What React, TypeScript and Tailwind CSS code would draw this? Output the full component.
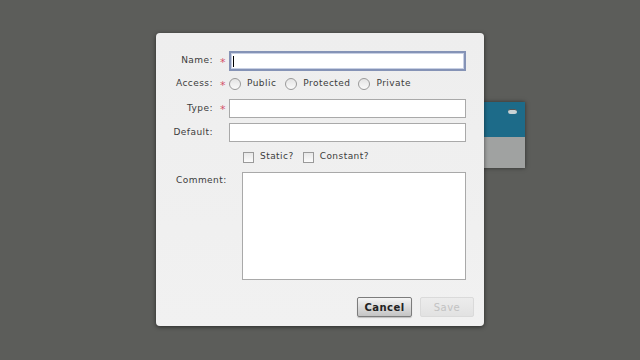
import React from 'react';

function Radio({ label, className = '' }: { label: string; className?: string }) {
  return (
    <label className={`flex items-center ${className}`}>
      <span className="w-[12px] h-[12px] rounded-full border border-[#9a9a9a] bg-gradient-to-b from-[#e4e4e4] to-[#fafafa]" />
      <span className="ml-[6px]">{label}</span>
    </label>
  );
}

function Check({ label, className = '' }: { label: string; className?: string }) {
  return (
    <label className={`flex items-center ${className}`}>
      <span className="w-[11px] h-[11px] border border-[#9a9a9a] bg-gradient-to-b from-[#e8e8e8] to-[#fbfbfb]" />
      <span className="ml-[6px]">{label}</span>
    </label>
  );
}

const Star = () => <span className="text-[#d4526a] text-[11px] leading-none translate-y-[1px]">*</span>;

export default function App() {
  return (
    <div
      className="relative w-[640px] h-[360px] overflow-hidden bg-[#5c5d5a] text-[9px] text-[#3c3c3c] tracking-[0.45px]"
      style={{ fontFamily: '"DejaVu Sans", "Liberation Sans", sans-serif' }}
    >
      {/* card behind the dialog */}
      <div className="absolute left-[440px] top-[102px] w-[85px] h-[66px] flex flex-col shadow-[0_0_4px_rgba(0,0,0,0.5)]">
        <div className="h-[35px] bg-[#1d6b89] relative">
          <span className="absolute right-[8px] top-[7px] w-[9px] h-[5px] rounded-full bg-[#c9d3d6] border-t border-[#555]" />
        </div>
        <div className="flex-1 bg-[#a0a2a1]" />
      </div>

      {/* dialog */}
      <div className="absolute left-[156px] top-[33px] w-[328px] h-[293px] rounded-[4px] bg-gradient-to-b from-[#eeeeee] to-[#f1f1f1] shadow-[0_1px_4px_rgba(0,0,0,0.55)] flex flex-col pt-[18px] pb-[9px]">
        <div className="grid grid-cols-[59px_14px_237px] items-center">
          <span className="text-right pr-[2px]">Name:</span>
          <span className="flex justify-center pl-[2px]"><Star /></span>
          <div className="h-[20px] bg-white border-2 border-[#8593b6] shadow-[inset_0_0_0_1px_#c8d0e4] flex items-center pl-[2px]">
            <span className="w-[1px] h-[11px] bg-black" />
          </div>

          <span className="text-right pr-[2px] mt-[3px]">Access:</span>
          <span className="flex justify-center pl-[2px] mt-[3px]"><Star /></span>
          <div className="h-[20px] mt-[3px] flex items-center">
            <Radio label="Public" />
            <Radio label="Protected" className="ml-[9px]" />
            <Radio label="Private" className="ml-[8px]" />
          </div>

          <span className="text-right pr-[2px] mt-[5px]">Type:</span>
          <span className="flex justify-center pl-[2px] mt-[5px]"><Star /></span>
          <div className="h-[19px] mt-[5px] bg-white border border-[#a9a9a9]" />

          <span className="text-right pr-[2px] mt-[5px]">Default:</span>
          <span className="mt-[5px]" />
          <div className="h-[19px] mt-[5px] bg-white border border-[#a9a9a9]" />
        </div>

        <div className="flex items-center h-[14px] mt-[8px] pl-[87px]">
          <Check label="Static?" />
          <Check label="Constant?" className="ml-[9px]" />
        </div>

        <div className="flex mt-[8px] pl-[20px]">
          <span className="w-[66px] pt-[2px]">Comment:</span>
          <div className="w-[224px] h-[108px] bg-white border border-[#a9a9a9]" />
        </div>

        <div className="flex justify-end mt-[17px] pr-[10px] gap-[8px]">
          <button className="w-[55px] h-[20px] rounded-[2px] border border-[#7c7c7c] bg-gradient-to-b from-[#f4f4f4] to-[#c4c4c4] font-bold text-[#222] text-[10px] shadow-[0_1px_1px_rgba(0,0,0,0.2)]">
            Cancel
          </button>
          <button className="w-[54px] h-[20px] rounded-[2px] border border-[#dadada] bg-gradient-to-b from-[#ececec] to-[#e2e2e2] text-[#c2c2c2] text-[10px]">
            Save
          </button>
        </div>
      </div>
    </div>
  );
}
